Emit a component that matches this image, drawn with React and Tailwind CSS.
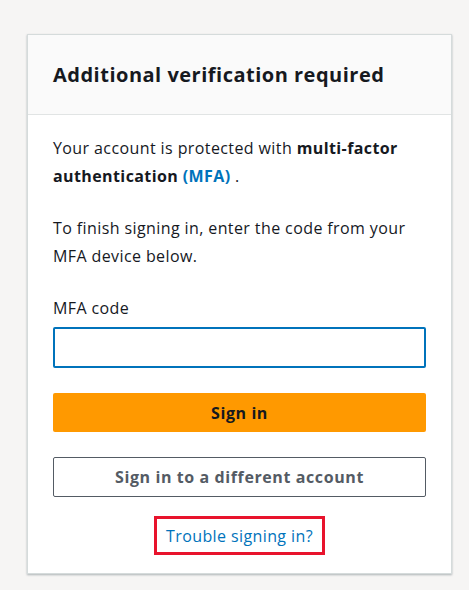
export default function App() {
  return (
    <div className="min-h-[590px] w-[469px] bg-[#f6f5f4] pt-[34px] pl-[27px] font-['Open_Sans',sans-serif] text-[#16191f]">
      <div className="w-[425px] border border-[#d5dbdb] bg-white shadow-[0_1px_2px_rgba(0,28,36,0.3)]">
        <div className="flex h-[80px] items-center border-b border-[#e1e4e4] bg-[#fafafa] px-[25px]">
          <h1 className="text-[20px] font-bold leading-[28px] tracking-[0.5px]">Additional verification required</h1>
        </div>
        <div className="px-[25px] pt-[19px] pb-[18px] text-[16px] leading-[28px] tracking-[0.4px]">
          <p>
            Your account is protected with <b>multi-factor authentication</b>{' '}
            <b className="text-[#0073bb]">(MFA)</b> .
          </p>
          <p className="mt-[24px]">To finish signing in, enter the code from your MFA device below.</p>
          <label className="mt-[24px] block">MFA code</label>
          <input className="mt-[5px] block h-[41px] w-full rounded-[2px] border-2 border-[#0073bb] px-3 outline-none" />
          <button className="mt-[25px] block h-[39px] w-full rounded-[2px] bg-[#ff9900] text-[16px] font-bold tracking-[0.6px] text-[#16191f]">
            Sign in
          </button>
          <button className="mt-[25px] block h-[40px] w-full rounded-[2px] border border-[#545b64] bg-white text-[16px] font-bold tracking-[0.6px] text-[#545b64]">
            Sign in to a different account
          </button>
          <div className="mt-[19px] flex justify-center">
            <a className="flex h-[39px] items-center border-[3px] border-[#e8132c] px-[9px] text-[#0073bb]">
              Trouble signing in?
            </a>
          </div>
        </div>
      </div>
    </div>
  )
}
